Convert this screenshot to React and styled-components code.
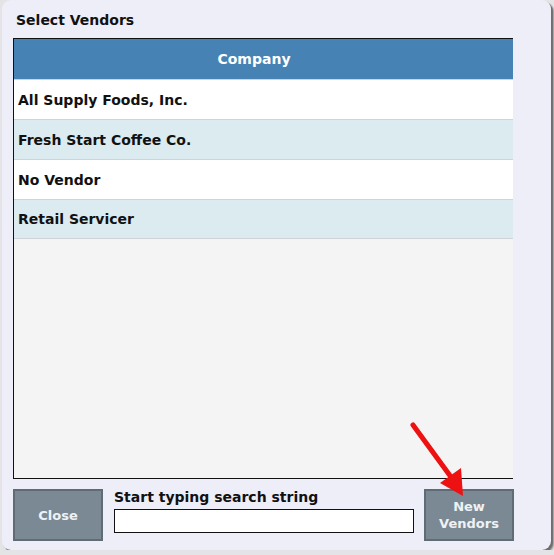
import React from 'react';
import styled, { createGlobalStyle } from 'styled-components';

const GlobalStyle = createGlobalStyle`
    html, body {
        margin: 0;
        padding: 0;
        background: #e4e4e6;
        font-family: 'DejaVu Sans', Verdana, sans-serif;
    }
`;

const Dialog = styled.div`
    position: relative;
    box-sizing: border-box;
    margin-left: 2px;
    width: 549px;
    height: 550px;
    background: #eeeef8;
    border-radius: 9px;
    box-shadow: 2px 2px 1px #6e6e6e, 3px 3px 2px #9a9a9a;
    padding: 0 0 0 11px;
    display: flex;
    flex-direction: column;
`;

const Title = styled.div`
    font-size: 14px;
    font-weight: bold;
    color: #111;
    padding: 12px 0 0 3px;
    height: 38px;
    box-sizing: border-box;
    flex: none;
`;

const Grid = styled.div`
    width: 500px;
    height: 441px;
    flex: none;
    box-sizing: border-box;
    border-top: 1px solid #111;
    border-left: 1px solid #111;
    border-bottom: 1px solid #111;
    background: #f4f4f4;
    display: flex;
    flex-direction: column;
`;

const Header = styled.div`
    height: 40px;
    flex: none;
    background: #4682b4;
    color: #fff;
    font-size: 14px;
    font-weight: bold;
    display: flex;
    align-items: center;
    justify-content: center;
    padding-right: 19px;
`;

const Row = styled.div`
    height: 40px;
    flex: none;
    box-sizing: border-box;
    background: ${p => (p.$alt ? '#dcebf0' : '#ffffff')};
    border-top: 1px solid #d0d4d8;
    display: flex;
    align-items: center;
    padding-left: 4px;
    font-size: 14px;
    font-weight: bold;
    color: #111;
    &:last-child {
        border-bottom: 1px solid #d0d4d8;
    }
`;

const Footer = styled.div`
    display: flex;
    align-items: flex-start;
    margin-top: 10px;
    width: 499px;
`;

const Button = styled.button`
    width: 90px;
    height: 52px;
    flex: none;
    box-sizing: border-box;
    background: #7b8994;
    border: 2px solid #5f6c76;
    color: #eef2f5;
    font-family: 'DejaVu Sans', Verdana, sans-serif;
    font-size: 13px;
    font-weight: bold;
    line-height: 17px;
    padding: 0;
    cursor: pointer;
`;

const Search = styled.div`
    flex: 1;
    display: flex;
    flex-direction: column;
    padding: 0 10px 0 11px;
`;

const Label = styled.label`
    font-size: 14px;
    font-weight: bold;
    color: #111;
    height: 20px;
    line-height: 17px;
`;

const Input = styled.input`
    box-sizing: border-box;
    width: 300px;
    height: 24px;
    border: 1px solid #111;
    background: #fff;
    margin: 0;
`;

const Arrow = styled.svg`
    position: absolute;
    left: 405px;
    top: 415px;
    width: 70px;
    height: 90px;
    pointer-events: none;
`;

const vendors = ['All Supply Foods, Inc.', 'Fresh Start Coffee Co.', 'No Vendor', 'Retail Servicer'];

export default function App() {
    return (
        <>
            <GlobalStyle />
            <Dialog>
                <Title>Select Vendors</Title>
                <Grid>
                    <Header>Company</Header>
                    {vendors.map((v, i) => (
                        <Row key={v} $alt={i % 2 === 1}>
                            {v}
                        </Row>
                    ))}
                </Grid>
                <Footer>
                    <Button>Close</Button>
                    <Search>
                        <Label>Start typing search string</Label>
                        <Input type='text' />
                    </Search>
                    <Button>
                        New
                        <br />
                        Vendors
                    </Button>
                </Footer>
                <Arrow viewBox='0 0 70 90'>
                    <line x1='6' y1='10' x2='44' y2='62' stroke='#ee1111' strokeWidth='5' strokeLinecap='round' />
                    <polygon points='33,68 54,53 56,81' fill='#ee1111' />
                </Arrow>
            </Dialog>
        </>
    );
}
